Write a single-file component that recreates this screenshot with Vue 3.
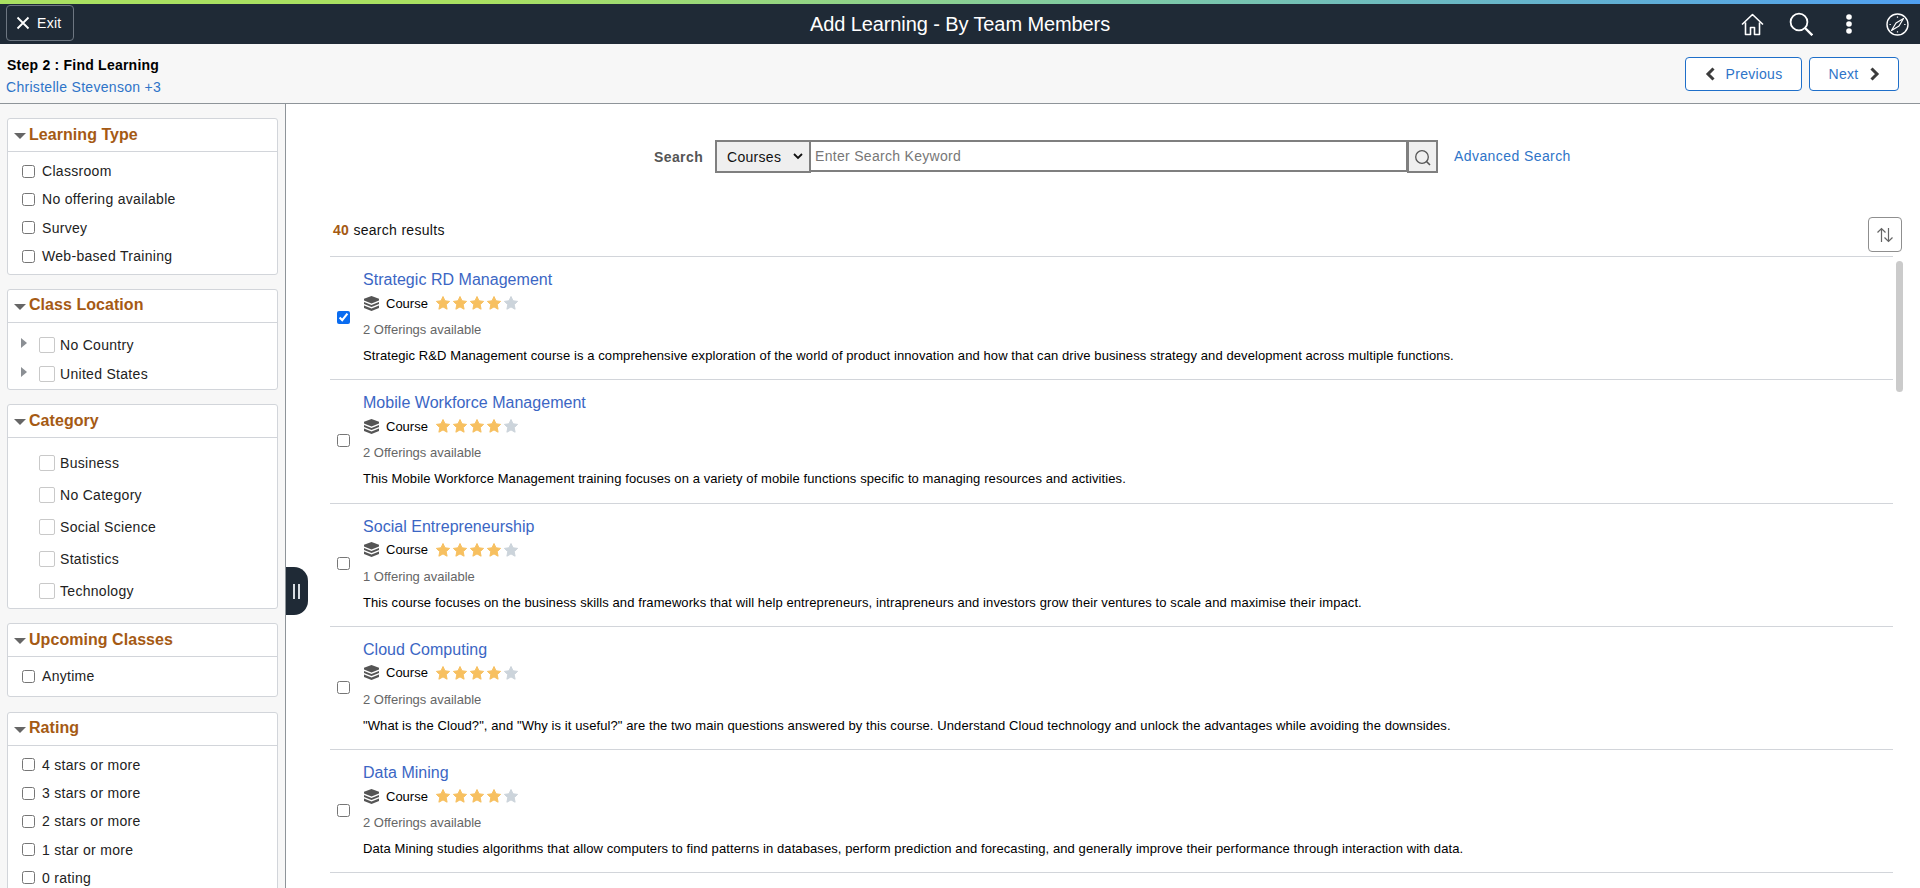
<script setup>
const filters = [
  { title: 'Learning Type', kind: 'plain', items: ['Classroom', 'No offering available', 'Survey', 'Web-based Training'] },
  { title: 'Class Location', kind: 'tree', items: ['No Country', 'United States'] },
  { title: 'Category', kind: 'square', items: ['Business', 'No Category', 'Social Science', 'Statistics', 'Technology'] },
  { title: 'Upcoming Classes', kind: 'plain', items: ['Anytime'] },
  { title: 'Rating', kind: 'plain', items: ['4 stars or more', '3 stars or more', '2 stars or more', '1 star or more', '0 rating'] },
]

const results = [
  {
    title: 'Strategic RD Management',
    offerings: '2 Offerings available',
    checked: true,
    desc: 'Strategic R&D Management course is a comprehensive exploration of the world of product innovation and how that can drive business strategy and development across multiple functions.',
  },
  {
    title: 'Mobile Workforce Management',
    offerings: '2 Offerings available',
    desc: 'This Mobile Workforce Management training focuses on a variety of mobile functions specific to managing resources and activities.',
  },
  {
    title: 'Social Entrepreneurship',
    offerings: '1 Offering available',
    desc: 'This course focuses on the business skills and frameworks that will help entrepreneurs, intrapreneurs and investors grow their ventures to scale and maximise their impact.',
  },
  {
    title: 'Cloud Computing',
    offerings: '2 Offerings available',
    desc: '"What is the Cloud?", and "Why is it useful?" are the two main questions answered by this course. Understand Cloud technology and unlock the advantages while avoiding the downsides.',
  },
  {
    title: 'Data Mining',
    offerings: '2 Offerings available',
    desc: 'Data Mining studies algorithms that allow computers to find patterns in databases, perform prediction and forecasting, and generally improve their performance through interaction with data.',
  },
]

const stars = [1, 2, 3, 4, 5]
const starPath = 'M8 1.500l2 4.300 4.600.6-3.400 3.200.9 4.600L8 11.900l-4.100 2.300.9-4.600L1.400 6.400 6 5.800z'
</script>

<template>
  <div class="page">
    <div class="accent"></div>

    <header class="banner">
      <button type="button" class="exit">
        <svg width="14" height="14" viewBox="0 0 14 14">
          <path d="M1.500 1.500l11 11M12.500 1.500l-11 11" stroke="#fff" stroke-width="1.800" fill="none" />
        </svg>
        <span>Exit</span>
      </button>
      <h1 class="banner__title">Add Learning - By Team Members</h1>
      <div class="banner__icons">
        <span class="banner__icon">
          <svg width="23" height="23" viewBox="0 0 23 23" fill="none" stroke="#fff" stroke-width="1.600">
            <path d="M1 11.500L11.500 1.500 22 11.500M4.500 9.500V21.500h5v-7h4v7h5V9.500" stroke-linejoin="round" />
          </svg>
        </span>
        <span class="banner__icon">
          <svg width="24" height="24" viewBox="0 0 24 24" fill="none" stroke="#fff">
            <circle cx="10" cy="10" r="8.400" stroke-width="1.800" />
            <path d="M16 16l7.300 7.300" stroke-width="2.300" />
          </svg>
        </span>
        <span class="banner__icon">
          <svg width="6" height="20" viewBox="0 0 6 20" fill="#fff">
            <circle cx="3" cy="3" r="2.800" />
            <circle cx="3" cy="10" r="2.800" />
            <circle cx="3" cy="17" r="2.800" />
          </svg>
        </span>
        <span class="banner__icon">
          <svg width="23" height="23" viewBox="0 0 23 23" fill="none" stroke="#fff">
            <circle cx="11.500" cy="11.500" r="10.500" stroke-width="1.400" />
            <path d="M17.500 5.500L13 13 5.500 17.500 10 10z" stroke-width="1.200" stroke-linejoin="round" />
            <path d="M11.500 3.500v1.300M11.500 18.200v1.300M3.500 11.500h1.300M18.200 11.500h1.300" stroke-width="1.200" />
          </svg>
        </span>
      </div>
    </header>

    <div class="subbar">
      <div class="subbar__left">
        <div class="subbar__step">Step 2 : Find Learning</div>
        <a class="link subbar__who">Christelle Stevenson +3</a>
      </div>
      <div class="subbar__nav">
        <button type="button" class="nav-btn nav-btn--prev">
          <svg width="10" height="14" viewBox="0 0 10 14"><path d="M8.500 1.500L3 7l5.500 5.500" fill="none" stroke="#3c3c3c" stroke-width="3" /></svg>
          Previous
        </button>
        <button type="button" class="nav-btn nav-btn--next">
          Next
          <svg width="10" height="14" viewBox="0 0 10 14"><path d="M1.500 1.500L7 7l-5.500 5.500" fill="none" stroke="#3c3c3c" stroke-width="3" /></svg>
        </button>
      </div>
    </div>

    <div class="body">
      <aside class="side">
        <section v-for="f in filters" :key="f.title" class="facet">
          <h2 class="facet__head"><i class="caret"></i>{{ f.title }}</h2>
          <ul class="facet__list" :class="'facet__list--' + f.kind">
            <li v-for="item in f.items" :key="item">
              <i v-if="f.kind === 'tree'" class="tree-arrow"></i>
              <i v-if="f.kind !== 'plain'" class="box"></i>
              <input v-else type="checkbox" class="check" />
              <span>{{ item }}</span>
            </li>
          </ul>
        </section>
      </aside>

      <button type="button" class="collapse" aria-label="Collapse">
        <i></i><i></i>
      </button>

      <main class="main">
        <div class="search">
          <label class="search__label">Search</label>
          <div class="search__select">
            <span>Courses</span>
            <svg width="10" height="7" viewBox="0 0 10 7"><path d="M1 1l4 4 4-4" fill="none" stroke="#111" stroke-width="1.800" /></svg>
          </div>
          <input class="search__input" type="text" placeholder="Enter Search Keyword" />
          <button type="button" class="search__go" aria-label="Search">
            <svg width="18" height="18" viewBox="0 0 18 18" fill="none" stroke="#555">
              <circle cx="8" cy="8" r="6.300" stroke-width="1.300" />
              <path d="M12.500 12.500l3.500 3.500" stroke-width="1.600" />
            </svg>
          </button>
          <a class="link search__adv">Advanced Search</a>
        </div>

        <div class="count">
          <span class="count__text"><b>40</b> search results</span>
          <button type="button" class="sort" aria-label="Sort">
            <svg width="18" height="16" viewBox="0 0 18 16" fill="none" stroke="#666" stroke-width="1.200">
              <path d="M5.500 15V1.500M1.500 5.500l4-4 4 4" />
              <path d="M12.500 1v13.500M8.500 10.500l4 4 4-4" />
            </svg>
          </button>
        </div>

        <div class="list">
          <article v-for="r in results" :key="r.title" class="row">
            <div class="row__check">
              <input type="checkbox" class="check" :checked="r.checked" />
            </div>
            <div class="row__info">
              <a class="row__title">{{ r.title }}</a>
              <div class="row__meta">
                <svg width="17" height="15" viewBox="0 0 17 15" fill="#555">
                  <path d="M8.500 0L16 2.800v1.700L8.500 7.500 1 4.500V2.800z" />
                  <path d="M1 6l7.500 3L16 6v2l-7.500 3L1 8z" />
                  <path d="M1 9.500l7.500 3 7.500-3V12l-7.500 3L1 12z" />
                </svg>
                <span class="row__type">Course</span>
                <span class="stars">
                  <svg v-for="s in stars" :key="s" width="16" height="16" viewBox="0 0 16 16">
                    <path
                      :d="starPath"
                      :fill="s < 5 ? '#f7c060' : '#ccd4db'"
                      :stroke="s < 5 ? '#f7c060' : '#ccd4db'"
                      stroke-width="1"
                      stroke-linejoin="round"
                    />
                  </svg>
                </span>
              </div>
              <div class="row__offer">{{ r.offerings }}</div>
              <p class="row__desc">{{ r.desc }}</p>
            </div>
          </article>
        </div>

        <div class="scrollbar"></div>
      </main>
    </div>
  </div>
</template>

<style scoped>
.page {
  height: 888px;
  display: flex;
  flex-direction: column;
  overflow: hidden;
  font-family: "Liberation Sans", Arial, sans-serif;
  letter-spacing: 0.3px;
  color: #111;
  background: #fff;
}

.accent {
  flex: none;
  height: 4px;
  background: linear-gradient(90deg, #a9e061 0%, #a9e061 25%, #7cc8a8 60%, #4f9ff0 100%);
}

.banner {
  flex: none;
  height: 40px;
  background: #1f2a36;
  display: flex;
  align-items: center;
  justify-content: space-between;
  padding: 0 0 0 6px;
  position: relative;
}
.banner__title {
  position: absolute;
  left: 0;
  right: 0;
  margin: 0;
  text-align: center;
  font-size: 20px;
  font-weight: 400;
  letter-spacing: -0.1px;
  color: #fff;
  pointer-events: none;
}
.banner__icons {
  display: flex;
  align-items: center;
  margin-right: -2px;
}
.banner__icon {
  width: 48.500px;
  display: flex;
  justify-content: center;
}

.exit {
  display: flex;
  align-items: center;
  gap: 7px;
  width: 68px;
  height: 36px;
  margin-top: -3px;
  padding: 0 0 0 9px;
  background: transparent;
  border: 1px solid #6d7681;
  border-radius: 4px;
  color: #fff;
  font: 14px "Liberation Sans", Arial, sans-serif;
  letter-spacing: inherit;
}

.subbar {
  flex: none;
  height: 59px;
  background: #f7f7f7;
  border-bottom: 1px solid #8e9499;
  display: flex;
  justify-content: space-between;
  align-items: center;
  padding: 0 21px 0 6px;
  box-sizing: content-box;
}
.subbar__left {
  padding-top: 5px;
}
.subbar__step {
  font-size: 14px;
  line-height: 16px;
  font-weight: 700;
  color: #000;
  margin: 0 0 6px 1px;
  letter-spacing: 0.23px;
}
.subbar__who {
  display: block;
  font-size: 14px;
  line-height: 16px;
}
.subbar__nav {
  display: flex;
  gap: 7px;
}

.link {
  color: #2e74c8;
  text-decoration: none;
}

.nav-btn {
  height: 34px;
  display: flex;
  align-items: center;
  justify-content: center;
  gap: 11px;
  background: #fff;
  border: 1px solid #1f6fc9;
  border-radius: 4px;
  color: #2e74c8;
  font: 14px "Liberation Sans", Arial, sans-serif;
  letter-spacing: inherit;
}
.nav-btn--prev {
  width: 117px;
}
.nav-btn--next {
  width: 90px;
}

.body {
  flex: 1;
  min-height: 0;
  display: flex;
  position: relative;
}

.side {
  flex: none;
  width: 286px;
  box-sizing: border-box;
  background: #f7f7f7;
  border-right: 1px solid #8e9499;
  padding: 14px 7px 0;
  overflow: hidden;
}

.facet {
  background: #fff;
  border: 1px solid #d2d5da;
  border-radius: 3px;
  margin-bottom: 13.700px;
}
.facet:nth-child(4) {
  margin-bottom: 15px;
}
.facet:nth-child(4) .facet__list {
  padding-bottom: 5.200px;
}
.facet__head {
  margin: 0;
  height: 33px;
  box-sizing: border-box;
  padding-bottom: 1px;
  display: flex;
  align-items: center;
  border-bottom: 1px solid #d2d5da;
  font-size: 16px;
  font-weight: 700;
  letter-spacing: 0.05px;
  color: #a55a14;
}
.caret {
  width: 0;
  height: 0;
  margin: 3px 3px 0 6px;
  border-left: 6px solid transparent;
  border-right: 6px solid transparent;
  border-top: 6px solid #666;
}
.facet__list {
  list-style: none;
  margin: 0;
  padding: 5px 0 4px;
  font-size: 14px;
  color: #222;
}
.facet__list li {
  display: flex;
  align-items: center;
  height: 28.300px;
}
.facet__list--plain li {
  padding-left: 14px;
}
.facet__list--tree {
  padding: 8px 0 0.500px;
}
.facet__list--tree li {
  height: 29px;
  padding-left: 13px;
}
.facet__list--square {
  padding: 9px 0 1.400px;
}
.facet__list--square li {
  height: 32px;
  padding-left: 31px;
}
.check {
  width: 13px;
  height: 13px;
  margin: 0 7px 0 0;
  accent-color: #0a6cf0;
}
.box {
  width: 14px;
  height: 14px;
  margin-right: 5px;
  background: #fff;
  border: 1px solid #c9c9c9;
  border-radius: 2px;
  flex: none;
}
.tree-arrow {
  width: 0;
  height: 0;
  margin: -4px 12px 0 0;
  border-top: 5px solid transparent;
  border-bottom: 5px solid transparent;
  border-left: 6px solid #8b8f94;
}

.collapse {
  position: absolute;
  left: 286px;
  top: 463px;
  width: 22px;
  height: 48px;
  padding: 0 0 0 7px;
  display: flex;
  align-items: center;
  gap: 3px;
  background: #1f2a36;
  border: 0;
  border-radius: 0 14px 14px 0;
}
.collapse i {
  display: block;
  width: 2px;
  height: 15px;
  background: #d8dde2;
}

.main {
  flex: 1;
  min-width: 0;
  position: relative;
  overflow: hidden;
}

.search {
  height: 33px;
  margin-top: 36px;
  display: flex;
  align-items: center;
  padding-left: 368px;
  font-size: 14px;
}
.search__label {
  width: 61px;
  font-size: 14px;
  font-weight: 700;
  letter-spacing: 0.4px;
  color: #555;
}
.search__select {
  width: 96px;
  height: 33px;
  box-sizing: border-box;
  border: 2px solid #7f7f7f;
  background: #efefef;
  display: flex;
  align-items: center;
  justify-content: space-between;
  padding: 0 6px 0 10px;
  color: #111;
}
.search__input {
  width: 598px;
  height: 32px;
  box-sizing: border-box;
  margin: -1px 0 0 -1px;
  border: 2px solid #7f7f7f;
  border-left-width: 1px;
  padding: 0 4px;
  font: 14px "Liberation Sans", Arial, sans-serif;
  letter-spacing: inherit;
  outline: none;
}
.search__input::placeholder {
  color: #777;
}
.search__go {
  width: 31px;
  height: 33px;
  margin-left: -1px;
  box-sizing: border-box;
  border: 2px solid #7f7f7f;
  background: #efefef;
  padding: 2px 0 0;
  display: flex;
  align-items: center;
  justify-content: center;
}
.search__adv {
  margin: -2px 0 0 16px;
  letter-spacing: 0.42px;
}

.count {
  height: 35px;
  margin: 44px 18px 4px 47px;
  display: flex;
  align-items: flex-start;
  justify-content: space-between;
  font-size: 14px;
}
.count__text {
  margin-top: 5px;
  line-height: 16px;
}
.count b {
  color: #a55a14;
}
.sort {
  width: 34px;
  height: 35px;
  background: #fff;
  border: 1px solid #8f8f8f;
  border-radius: 4px;
  padding: 0;
  display: flex;
  align-items: center;
  justify-content: center;
}

.list {
  margin: 0 27px 0 44px;
  border-top: 1px solid #d2d5da;
}
.row {
  height: 123.300px;
  box-sizing: border-box;
  border-bottom: 1px solid #d2d5da;
  display: flex;
}
.row__check {
  width: 33px;
  flex: none;
  display: flex;
  align-items: center;
  padding: 0 0 2px 7px;
  box-sizing: border-box;
}
.row__check .check {
  margin: 0;
}
.row__info {
  padding-top: 13px;
}
.row__title {
  display: block;
  font-size: 16px;
  line-height: 20px;
  letter-spacing: 0.03px;
  color: #3b66c4;
}
.row__meta {
  display: flex;
  align-items: center;
  height: 20px;
  margin-top: 3px;
  font-size: 13px;
  letter-spacing: 0;
  color: #000;
}
.row__type {
  margin: 0 7px 0 6px;
}
.stars {
  display: flex;
  gap: 1px;
}
.row__offer {
  margin-top: 9px;
  font-size: 13px;
  letter-spacing: 0;
  color: #666;
}
.row__desc {
  margin: 11px 0 0;
  font-size: 13px;
  letter-spacing: 0.09px;
  color: #000;
}

.scrollbar {
  position: absolute;
  right: 17px;
  top: 157px;
  width: 7px;
  height: 131px;
  border-radius: 4px;
  background: #cbcbcb;
}
</style>
